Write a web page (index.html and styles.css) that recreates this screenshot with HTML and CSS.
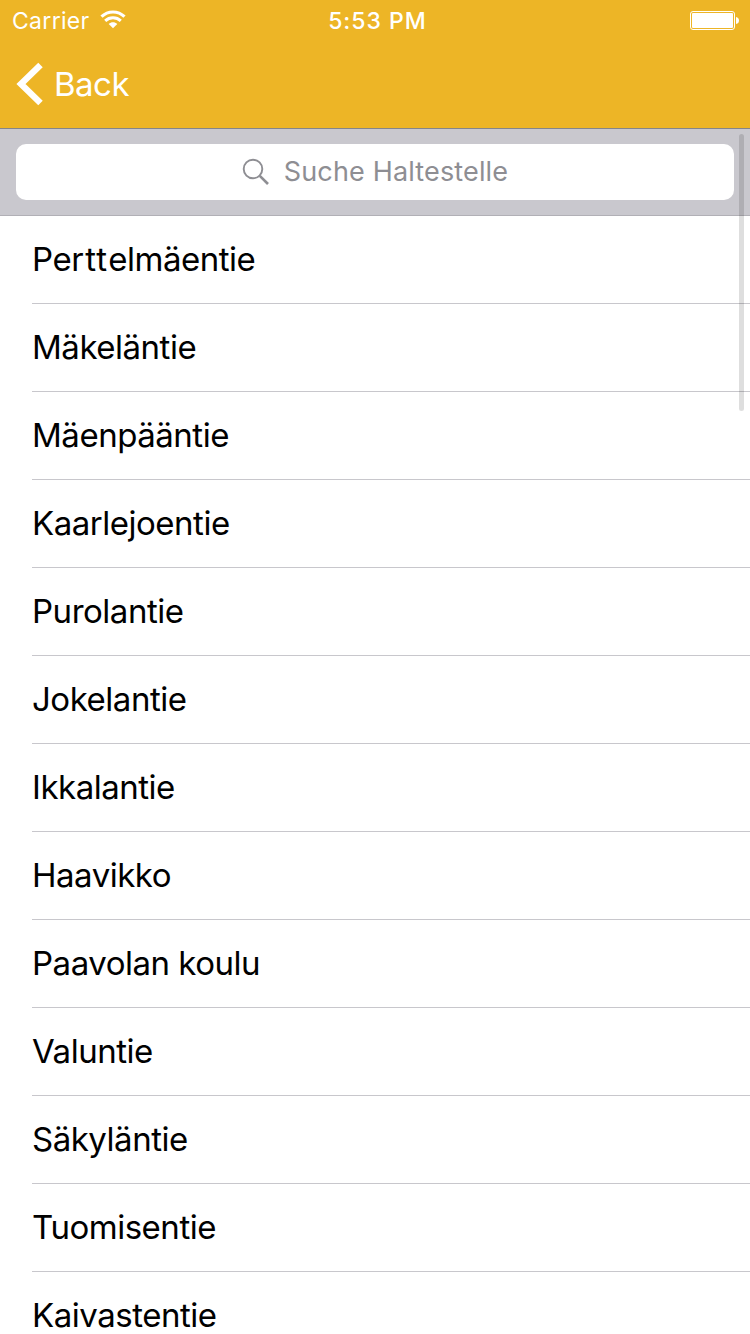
FILE: index.html
```html
<!DOCTYPE html>
<html lang="de">
<head>
<meta charset="utf-8">
<title>Haltestellen</title>
<link rel="stylesheet" href="styles.css">
</head>
<body>
<div class="screen">
  <header class="header">
    <div class="status">
      <div class="status-left">
        <span class="carrier">Carrier</span>
        <svg class="wifi" width="26" height="20" viewBox="0 0 26 20" fill="none" stroke="#fff">
          <path d="M1.500 6.700C8 .4 18 .4 24.500 6.700" stroke-width="3.200"/>
          <path d="M5.200 10.900C9.600 6.800 16.400 6.800 20.800 10.900" stroke-width="3"/>
          <path d="M8.700 14C11.100 11.700 14.900 11.700 17.300 14L13 18.300Z" fill="#fff" stroke="none"/>
        </svg>
      </div>
      <span class="time">5:53 PM</span>
      <svg class="battery" width="50" height="20" viewBox="0 0 50 20">
        <rect x=".5" y=".5" width="44" height="18" rx="2.500" fill="none" stroke="#fff"/>
        <rect x="2" y="2" width="41" height="15" rx="1" fill="#fff"/>
        <path d="M46 6q3 .5 3 3.500t-3 3.500z" fill="#fff"/>
      </svg>
    </div>
    <nav class="nav">
      <svg class="chevron" width="28" height="44" viewBox="0 0 28 44">
        <path d="M24.500 3L5 22L24.500 41" fill="none" stroke="#fff" stroke-width="6.400"/>
      </svg>
      <span class="back">Back</span>
    </nav>
  </header>
  <div class="search-bar">
    <div class="search-field">
      <svg class="magnifier" width="28" height="28" viewBox="0 0 28 28" fill="none" stroke="#8e8e93">
        <circle cx="11" cy="11" r="9.300" stroke-width="1.900"/>
        <path d="M17.800 17.800L26 26" stroke-width="2.600"/>
      </svg>
      <span class="placeholder">Suche Haltestelle</span>
    </div>
  </div>
  <ul class="stops">
    <li class="stop"><span>Pe<span class="loose">rtt</span>elmäentie</span></li>
    <li class="stop"><span>Mäkeläntie</span></li>
    <li class="stop"><span>Mäenpääntie</span></li>
    <li class="stop"><span>Kaarlejoentie</span></li>
    <li class="stop"><span>Purolantie</span></li>
    <li class="stop"><span>Jokelantie</span></li>
    <li class="stop"><span>Ikkalantie</span></li>
    <li class="stop"><span>Haavikko</span></li>
    <li class="stop"><span>Paavolan koulu</span></li>
    <li class="stop"><span>Valuntie</span></li>
    <li class="stop"><span>Säkyläntie</span></li>
    <li class="stop"><span>Tuomisentie</span></li>
    <li class="stop"><span>Kaivastentie</span></li>
  </ul>
  <div class="scrollbar"></div>
</div>
</body>
</html>
```
FILE: styles.css
```css
* { box-sizing: border-box; }
body {
  margin: 0;
  background: #fff;
  font-family: Inter, "Liberation Sans", sans-serif;
}
.screen {
  position: relative;
  width: 750px;
  height: 1334px;
  overflow: hidden;
}
.header {
  height: 129px;
  background: #edb526;
  border-bottom: 1px solid #84858a;
  color: #fff;
}
.status {
  display: grid;
  grid-template-columns: 1fr auto 1fr;
  height: 40px;
  line-height: 42px;
  padding: 0 10px 0 12px;
}
.status-left { display: flex; }
.carrier {
  width: 88px;
  font-size: 23px;
  letter-spacing: .3px;
  white-space: nowrap;
}
.wifi { margin-top: 10px; }
.time {
  font-size: 23px;
  font-weight: 500;
  letter-spacing: 1px;
  padding-left: 3px;
}
.battery { justify-self: end; margin-top: 11px; }
.nav {
  display: flex;
  align-items: center;
  height: 88px;
  padding-left: 16px;
}
.chevron { margin-right: 10px; }
.back {
  font-size: 33px;
  letter-spacing: -.5px;
}
.search-bar {
  height: 87px;
  padding: 15px 16px;
  background: #c9c8ce;
  border-bottom: 1px solid #b1b0b6;
}
.search-field {
  display: flex;
  align-items: center;
  justify-content: center;
  height: 56px;
  border-radius: 10px;
  background: #fff;
}
.magnifier { margin-right: 14px; }
.placeholder {
  padding-bottom: 2px;
  color: #8e8e93;
  font-size: 27px;
  letter-spacing: .15px;
}
.stops { list-style: none; margin: 0; padding: 0 0 0 32px; }
.stop {
  display: flex;
  align-items: center;
  height: 88px;
  padding-bottom: 2px;
  border-bottom: 1px solid #c8c7cc;
  color: #000;
  font-size: 33px;
  letter-spacing: -.48px;
}
.loose { letter-spacing: 1.1px; }
.scrollbar {
  position: absolute;
  left: 739px;
  top: 134px;
  width: 5px;
  height: 277px;
  border-radius: 3px;
  background: rgba(0, 0, 0, .13);
}
```
